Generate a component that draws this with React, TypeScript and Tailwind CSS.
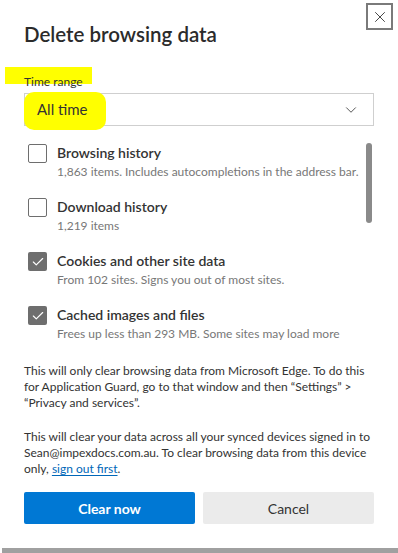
import { ChevronDown, Check, X } from "lucide-react";

const ITEMS = [
  { label: "Browsing history", sub: "1,863 items. Includes autocompletions in the address bar.", on: false },
  { label: "Download history", sub: "1,219 items", on: false },
  { label: "Cookies and other site data", sub: "From 102 sites. Signs you out of most sites.", on: true },
  { label: "Cached images and files", sub: "Frees up less than 293 MB. Some sites may load more", on: true },
];

export default function App() {
  return (
    <div
      className="relative w-[398px] h-[553px] bg-white overflow-hidden text-[#333]"
      style={{ fontFamily: '"Segoe UI", Lato, "Noto Sans", sans-serif' }}
    >
      <button
        type="button"
        className="absolute top-[3px] right-[5px] w-[27px] h-[27px] border-2 border-[#7a7a7a] flex items-center justify-center"
      >
        <X className="w-[18px] h-[18px] text-[#333]" strokeWidth={1.2} />
      </button>

      <div className="flex flex-col px-[24px] pt-[21px]">
        <h1 className="text-[20.5px] leading-[26px] font-semibold text-[#2b2b2b]">Delete browsing data</h1>

        <div className="relative mt-[21px] h-[16px]">
          <div className="absolute left-[-19px] top-[-1px] w-[87px] h-[17px] bg-[#ffff00]" />
          <span className="relative text-[12px] leading-[16px]">Time range</span>
        </div>

        <div className="relative mt-[9px] h-[33px] border border-[#cfcfcf] flex items-center justify-between pl-[12px] pr-[13px]">
          <div className="absolute left-[-1px] top-[-2px] w-[82px] h-[38px] bg-[#ffff00] rounded-[10px]" />
          <span className="relative text-[15px]">All time</span>
          <ChevronDown className="w-[18px] h-[18px] text-[#444]" strokeWidth={1.2} />
        </div>

        <div className="relative mt-[17px] flex">
          <div className="flex-1 flex flex-col gap-[16px] pl-[4px]">
            {ITEMS.map((it) => (
              <div key={it.label} className="flex gap-[10px]">
                {it.on ? (
                  <div className="mt-[1px] w-[19px] h-[19px] rounded-[2px] bg-[#6e6e6e] flex items-center justify-center shrink-0">
                    <Check className="w-[14px] h-[14px] text-white" strokeWidth={2} />
                  </div>
                ) : (
                  <div className="mt-[1px] w-[19px] h-[19px] rounded-[2px] border border-[#6e6e6e] bg-white shrink-0" />
                )}
                <div className="flex flex-col">
                  <span className="text-[14px] leading-[20px] font-semibold text-[#333]">{it.label}</span>
                  <span className="text-[12px] leading-[18px] text-[#777] whitespace-nowrap">{it.sub}</span>
                </div>
              </div>
            ))}
          </div>
          <div className="w-[6px] h-[80px] rounded-full bg-[#8a8a8a] mr-[2px] shrink-0" />
        </div>

        <p className="mt-[20px] text-[12px] leading-[16px] text-[#333]">
          This will only clear browsing data from Microsoft Edge. To do this for Application Guard, go to that window and then “Settings” &gt; “Privacy and services”.
        </p>
        <p className="mt-[18px] text-[12px] leading-[16px] text-[#333]">
          This will clear your data across all your synced devices signed in to Sean@impexdocs.com.au. To clear browsing data from this device only,{" "}
          <span className="text-[#0067b8] underline underline-offset-2">sign out first</span>.
        </p>

        <div className="mt-[15px] flex gap-[8px]">
          <button type="button" className="flex-1 h-[32px] rounded-[2px] bg-[#0078d4] text-white text-[14px] font-bold">
            Clear now
          </button>
          <button type="button" className="flex-1 h-[32px] rounded-[2px] bg-[#ebebeb] text-[#333] text-[14px]">
            Cancel
          </button>
        </div>
      </div>

      <div className="absolute bottom-0 left-[2px] right-0 h-[5px] bg-[#a0a0a0]" />
    </div>
  );
}
